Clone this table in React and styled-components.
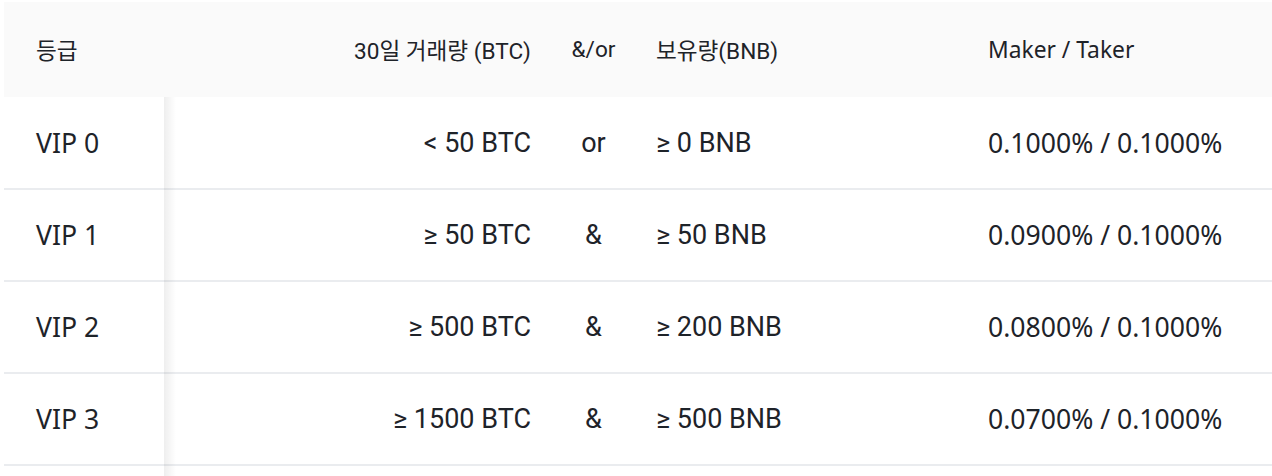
import React from "react";
import styled, { createGlobalStyle } from "styled-components";

const GlobalStyle = createGlobalStyle`
  html, body {
    margin: 0;
    padding: 0;
    background: #ffffff;
  }
`;

const rows = [
  { level: "VIP 0", volume: "< 50 BTC", op: "or", bnb: "≥ 0 BNB", fee: "0.1000% / 0.1000%" },
  { level: "VIP 1", volume: "≥ 50 BTC", op: "&", bnb: "≥ 50 BNB", fee: "0.0900% / 0.1000%" },
  { level: "VIP 2", volume: "≥ 500 BTC", op: "&", bnb: "≥ 200 BNB", fee: "0.0800% / 0.1000%" },
  { level: "VIP 3", volume: "≥ 1500 BTC", op: "&", bnb: "≥ 500 BNB", fee: "0.0700% / 0.1000%" },
  // next tier only peeks in at the bottom edge
  { level: "", volume: "", op: "", bnb: "", fee: "" },
];

const Page = () => {
  return (
    <>
      <GlobalStyle />
      <Wrapper>
        <Table>
          <colgroup>
            <col style={{ width: 160 }} />
            <col style={{ width: 399 }} />
            <col style={{ width: 61 }} />
            <col style={{ width: 332 }} />
            <col />
          </colgroup>
          <thead>
            <tr>
              <HeadCell $sticky>등급</HeadCell>
              <HeadCell $align="right">30일 거래량 (BTC)</HeadCell>
              <HeadCell $align="center">&amp;/or</HeadCell>
              <HeadCell>보유량(BNB)</HeadCell>
              <HeadCell $plex>Maker / Taker</HeadCell>
            </tr>
          </thead>
          <tbody>
            {rows.map((r, i) => (
              <tr key={i}>
                <Cell $sticky $plex>{r.level}</Cell>
                <Cell $align="right">{r.volume}</Cell>
                <Cell $align="center">{r.op}</Cell>
                <Cell>{r.bnb}</Cell>
                <Cell $plex>{r.fee}</Cell>
              </tr>
            ))}
          </tbody>
        </Table>
      </Wrapper>
    </>
  );
};

const Wrapper = styled.div`
  padding: 2px 0 0 4px;
  height: 476px;
  box-sizing: border-box;
  overflow: hidden;
`;

const Table = styled.table`
  width: 1300px;
  table-layout: fixed;
  border-collapse: collapse;
  color: #1e2329;
`;

const baseCell = `
  position: relative;
  white-space: nowrap;
  box-sizing: border-box;
  vertical-align: middle;
`;

const stickyShadow = `
  content: "";
  position: absolute;
  top: 0;
  right: -12px;
  width: 12px;
  background: linear-gradient(to right, rgba(0, 0, 0, 0.065), rgba(0, 0, 0, 0));
`;

const HeadCell = styled.th`
  ${baseCell}
  height: 95px;
  padding: 0 32px;
  background: #fafafa;
  font-family: ${(p) => (p.$plex ? `"Noto Sans", sans-serif` : `Roboto, "Noto Sans CJK KR", sans-serif`)};
  font-size: ${(p) => (p.$plex ? "22.8px" : "22.6px")};
  font-weight: 400;
  text-align: ${(p) => p.$align || "left"};
  ${(p) => p.$align === "center" && "padding: 0;"}

  &::after {
    ${stickyShadow}
    bottom: 0;
    display: ${(p) => (p.$sticky ? "block" : "none")};
  }
`;

const Cell = styled.td`
  ${baseCell}
  height: 92px;
  padding: 0 32px;
  border-bottom: 2px solid #eaecef;
  font-family: ${(p) => (p.$plex ? `"Noto Sans", sans-serif` : `Roboto, "Noto Sans CJK KR", sans-serif`)};
  font-size: ${(p) => (p.$plex ? "26.6px" : "27px")};
  text-align: ${(p) => p.$align || "left"};
  ${(p) => p.$align === "center" && "padding: 0;"}

  &::after {
    ${stickyShadow}
    bottom: -2px;
    display: ${(p) => (p.$sticky ? "block" : "none")};
  }
`;

export default Page;
